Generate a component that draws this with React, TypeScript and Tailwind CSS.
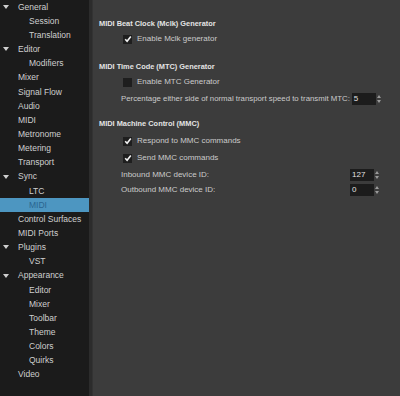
const tree: { label: string; depth: 0 | 1; open?: boolean; selected?: boolean }[] = [
  { label: 'General', depth: 0, open: true },
  { label: 'Session', depth: 1 },
  { label: 'Translation', depth: 1 },
  { label: 'Editor', depth: 0, open: true },
  { label: 'Modifiers', depth: 1 },
  { label: 'Mixer', depth: 0 },
  { label: 'Signal Flow', depth: 0 },
  { label: 'Audio', depth: 0 },
  { label: 'MIDI', depth: 0 },
  { label: 'Metronome', depth: 0 },
  { label: 'Metering', depth: 0 },
  { label: 'Transport', depth: 0 },
  { label: 'Sync', depth: 0, open: true },
  { label: 'LTC', depth: 1 },
  { label: 'MIDI', depth: 1, selected: true },
  { label: 'Control Surfaces', depth: 0 },
  { label: 'MIDI Ports', depth: 0 },
  { label: 'Plugins', depth: 0, open: true },
  { label: 'VST', depth: 1 },
  { label: 'Appearance', depth: 0, open: true },
  { label: 'Editor', depth: 1 },
  { label: 'Mixer', depth: 1 },
  { label: 'Toolbar', depth: 1 },
  { label: 'Theme', depth: 1 },
  { label: 'Colors', depth: 1 },
  { label: 'Quirks', depth: 1 },
  { label: 'Video', depth: 0 },
];

function Check({ on }: { on?: boolean }) {
  return (
    <span className="flex h-[9px] w-[9px] shrink-0 items-center justify-center bg-[#1e1e1e]">
      {on ? (
        <svg width="8" height="8" viewBox="0 0 8 8">
          <path d="M1.2 4.2 L3.1 6.2 L6.8 1.4" fill="none" stroke="#f2f2f2" strokeWidth="1.6" />
        </svg>
      ) : null}
    </span>
  );
}

function Spin({ value }: { value: string }) {
  return (
    <div className="flex items-center">
      <div className="h-[12px] w-[24px] bg-[#1c1c1c] pl-[2px] text-[8px] leading-[12px] text-[#e2e2e2]">{value}</div>
      <div className="flex h-[12px] w-[6px] flex-col items-center justify-center gap-[2px]">
        <svg width="4" height="3" viewBox="0 0 4 3">
          <path d="M0 3 L2 0 L4 3Z" fill="#9a9a9a" />
        </svg>
        <svg width="4" height="3" viewBox="0 0 4 3">
          <path d="M0 0 L4 0 L2 3Z" fill="#9a9a9a" />
        </svg>
      </div>
    </div>
  );
}

function Option({ on, label, className }: { on?: boolean; label: string; className: string }) {
  return (
    <div className={`ml-[24px] flex h-[14px] items-center gap-[5px] ${className}`}>
      <Check on={on} />
      <span>{label}</span>
    </div>
  );
}

export default function App() {
  return (
    <div className="flex h-[396px] w-[400px] overflow-hidden bg-[#3c3c3c] font-['Liberation_Sans',Arial,sans-serif]">
      <nav className="h-full w-[89px] shrink-0 bg-[#1b1b1b] text-[8.5px] text-[#cfcfcf]">
        {tree.map((item, i) => (
          <div
            key={i}
            className={`relative flex h-[14.15px] items-center ${item.depth ? 'pl-[29px]' : 'pl-[18px]'} ${
              item.selected ? 'bg-[#4d96c1] text-[#2a6590]' : ''
            }`}
          >
            {item.open ? (
              <svg className="absolute left-[3px] top-[5px]" width="6" height="4" viewBox="0 0 6 4">
                <path d="M0 0 L6 0 L3 4Z" fill="#cfcfcf" />
              </svg>
            ) : null}
            {item.label}
          </div>
        ))}
      </nav>
      <div className="h-full w-[3px] shrink-0 bg-[#2c2c2c]" />
      <div className="h-full w-[1px] shrink-0 bg-[#333333]" />
      <main className="flex-1 pl-[6px] pt-[17px] text-[8px] text-[#cbcbcb]">
        <div className="flex h-[14px] items-center text-[7.4px] font-bold text-[#e4e4e4]">MIDI Beat Clock (Mclk) Generator</div>
        <Option on label="Enable Mclk generator" className="mt-[1px]" />
        <div className="mt-[14px] flex h-[14px] items-center text-[7.4px] font-bold text-[#e4e4e4]">MIDI Time Code (MTC) Generator</div>
        <Option label="Enable MTC Generator" className="mt-[1px]" />
        <div className="ml-[22px] mt-[3px] flex h-[14px] items-center gap-[2px]">
          <span className="text-[7.8px]">Percentage either side of normal transport speed to transmit MTC:</span>
          <Spin value="5" />
        </div>
        <div className="mt-[11px] flex h-[14px] items-center text-[7.4px] font-bold text-[#e4e4e4]">MIDI Machine Control (MMC)</div>
        <Option on label="Respond to MMC commands" className="mt-[3px]" />
        <Option on label="Send MMC commands" className="mt-[3px]" />
        <div className="ml-[22px] mt-[3px] flex h-[14px] w-[259px] items-center justify-between">
          <span>Inbound MMC device ID:</span>
          <Spin value="127" />
        </div>
        <div className="ml-[22px] mt-[1px] flex h-[14px] w-[259px] items-center justify-between">
          <span>Outbound MMC device ID:</span>
          <Spin value="0" />
        </div>
      </main>
    </div>
  );
}
